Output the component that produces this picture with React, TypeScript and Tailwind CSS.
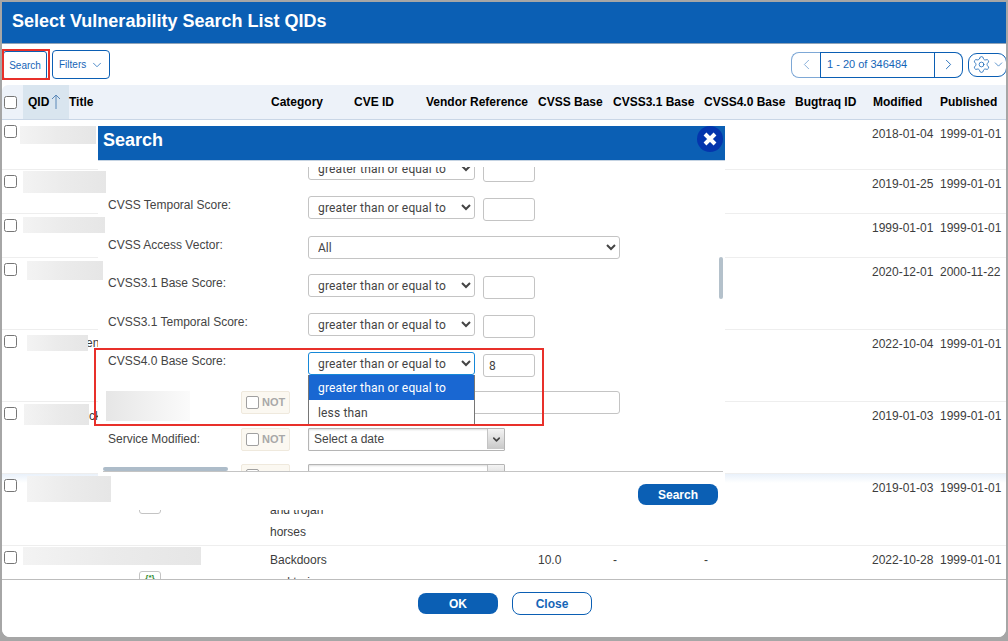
import { ChevronDown, ChevronLeft, ChevronRight, Settings } from "lucide-react";

const rows = [
  { h: "h-[50px]", mod: "2018-01-04", pub: "1999-01-01" },
  { h: "h-[44px]", mod: "2019-01-25", pub: "1999-01-01" },
  { h: "h-[44px]", mod: "1999-01-01", pub: "1999-01-01" },
  { h: "h-[72px]", mod: "2020-12-01", pub: "2000-11-22" },
  { h: "h-[72px]", tail: "en", tailClass: "pt-[2px] pl-[63px]", mod: "2022-10-04", pub: "1999-01-01" },
  { h: "h-[72px]", tail: "ck", tailClass: "pt-[3px] pl-[66px]", mod: "2019-01-03", pub: "1999-01-01" },
  {
    h: "h-[72px] bg-[linear-gradient(#e9f1fa,#ffffff_9px)]",
    cat: ["Backdoors", "and trojan", "horses"],
    mod: "2019-01-03",
    pub: "1999-01-01",
    icon: true,
  },
  {
    h: "h-[72px]",
    cat: ["Backdoors", "and trojan", "horses"],
    base: "10.0",
    v31: "-",
    v40: "-",
    mod: "2022-10-28",
    pub: "1999-01-01",
    icon: true,
  },
];

// blurred-out names sit on top of everything, modal included
const redactions = [
  "top-[126px] left-[20px] h-[18px] w-[76px]",
  "top-[171px] left-[23px] h-[22px] w-[83px]",
  "top-[217px] left-[23px] h-[16px] w-[82px]",
  "top-[261px] left-[27px] h-[19px] w-[76px]",
  "top-[335px] left-[27px] h-[16px] w-[61px]",
  "top-[404px] left-[24px] h-[21px] w-[65px]",
  "top-[476px] left-[27px] h-[26px] w-[84px]",
  "top-[547px] left-[23px] h-[18px] w-[178px]",
];

const gridCols =
  "grid grid-cols-[21px_46px_202px_83px_72px_112px_75px_91px_91px_78px_67px_66px]";

export default function App() {
  return (
    <div className="relative h-[641px] w-[1008px] overflow-hidden bg-[#a6a6a6] pt-[2px] pr-[2px] pb-[4px] pl-[2px] font-['Liberation_Sans',Arial,sans-serif] text-[12px]">
      <div className="flex h-full flex-col overflow-hidden rounded-b-[8px] bg-white">
        <header className="flex h-[42px] shrink-0 items-center border-b border-[#8fa3b8] bg-[#0b5fb4] pb-[2px] pl-[10px] text-[18px] font-bold text-white">
          Select Vulnerability Search List QIDs
        </header>
        <Toolbar />
        <Table />
        <Footer />
      </div>
      <SearchModal />
      {redactions.map((r) => (
        <div key={r} className={`absolute z-20 ${r} bg-gradient-to-r from-[#f3f3f3] via-[#ebebeb] to-[#e6e6e6]`} />
      ))}
      <div className="absolute top-[391px] left-[106px] z-20 h-[30px] w-[84px] bg-gradient-to-r from-[#e6e6e6] to-[#fbfbfb]" />
      <div className="absolute top-[49px] left-[2px] h-[31px] w-[48px] border-2 border-[#e8302a]" />
      <div className="absolute top-[348px] left-[94px] z-30 h-[78px] w-[450px] border-2 border-[#e8302a]" />
    </div>
  );
}

function Toolbar() {
  return (
    <div className="flex h-[41px] shrink-0 items-center pl-[1px] text-[#1565b7]">
      <button className="mt-[1px] h-[29px] w-[44px] rounded-[3px] border border-[#0b5fb4] text-[10px]">
        Search
      </button>
      <button className="ml-[5px] flex h-[29px] w-[58px] items-center gap-[4px] rounded-[4px] border border-[#0b5fb4] pl-[6px] text-[10px]">
        Filters
        <ChevronDown size={14} strokeWidth={1.25} />
      </button>
      <div className="ml-auto flex h-[26px] items-center">
        <button className="flex h-[26px] w-[29px] items-center justify-center rounded-l-[8px] border border-r-0 border-[#7ea8d6] text-[#7ea8d6]">
          <ChevronLeft size={17} strokeWidth={1.25} />
        </button>
        <div className="flex h-[26px] w-[115px] items-center border border-[#0b5fb4] pl-[6px] text-[11px]">
          1 - 20 of 346484
        </div>
        <button className="flex h-[26px] w-[28px] items-center justify-center rounded-r-[8px] border border-l-0 border-[#0b5fb4]">
          <ChevronRight size={17} strokeWidth={1.25} />
        </button>
        <button className="mr-[-1px] ml-[5px] flex h-[24px] w-[39px] items-center gap-[1px] rounded-[9px] border border-[#0b5fb4] pl-[3px]">
          <Settings size={19} strokeWidth={1} />
          <ChevronDown size={13} strokeWidth={1.25} />
        </button>
      </div>
    </div>
  );
}

function Table() {
  return (
    <div className="min-h-0 flex-1 overflow-hidden">
      <div className={`${gridCols} h-[35px] items-center rounded-tl-[6px] border-b border-[#c9d6e6] bg-[#edf2f9] font-bold text-black`}>
        <div className="pl-[2px]">
          <input type="checkbox" className="block" />
        </div>
        <div className="flex h-full items-center bg-[#d9e5ef] pl-[5px]">
          QID
          <svg width="10" height="16" viewBox="0 0 10 16" fill="none" stroke="#5b88b8" className="ml-[2px]">
            <path d="M5 15V1M1 5l4-4 4 4" />
          </svg>
        </div>
        <div>Title</div>
        <div>Category</div>
        <div>CVE ID</div>
        <div className="whitespace-nowrap">Vendor Reference</div>
        <div>CVSS Base</div>
        <div className="whitespace-nowrap">CVSS3.1 Base</div>
        <div className="whitespace-nowrap">CVSS4.0 Base</div>
        <div>Bugtraq ID</div>
        <div>Modified</div>
        <div>Published</div>
      </div>
      {rows.map((row) => (
        <div key={row.mod + row.h} className={`${gridCols} ${row.h} border-b border-[#eeeeee] leading-[22px] text-[#3c3c3c]`}>
          <div className="pt-[5px] pl-[2px]">
            <input type="checkbox" className="block" />
          </div>
          <div className="relative">
            {row.tail && <div className={row.tailClass}>{row.tail}</div>}
            {row.icon && (
              <div className="absolute top-[25px] left-[116px] h-[15px] w-[22px] rounded-[3px] border border-[#c4c4c4] text-center text-[8px] leading-[12px] font-bold text-[#2e8b2e]">
                {"{*}"}
              </div>
            )}
          </div>
          <div />
          <div className="-ml-[1px] pt-[3px]">
            {row.cat?.map((line) => (
              <div key={line}>{line}</div>
            ))}
          </div>
          <div />
          <div />
          <div className="pt-[3px]">{row.base}</div>
          <div className="pt-[3px]">{row.v31}</div>
          <div className="pt-[3px]">{row.v40}</div>
          <div />
          <div className="-ml-[1px] pt-[3px]">{row.mod}</div>
          <div className="pt-[3px]">{row.pub}</div>
        </div>
      ))}
    </div>
  );
}

function Footer() {
  return (
    <div className="flex h-[58px] shrink-0 items-start justify-center gap-[14px] border-t border-[#bdbdbd] bg-white pt-[13px] pl-[2px] text-[12px] font-bold">
      <button className="h-[21px] w-[80px] rounded-[8px] bg-[#0b5fb4] text-white">OK</button>
      <button className="-mt-[1px] h-[23px] w-[80px] rounded-[8px] border border-[#0b5fb4] text-[#1565b7]">Close</button>
    </div>
  );
}

function ScoreSelect({ focused }: { focused?: boolean }) {
  return (
    <select
      className={`h-[23px] w-[167px] rounded-[3px] border pl-[5px] font-['Roboto',sans-serif] text-[12px] tracking-[0.15px] text-[#444] ${
        focused ? "border-[#1688d8]" : "border-[#c4c4c4]"
      }`}
      defaultValue="gte"
    >
      <option value="gte">greater than or equal to</option>
      <option value="lt">less than</option>
    </select>
  );
}

function ScoreRow({ label, h, value, open }: { label: string; h: string; value?: string; open?: boolean }) {
  return (
    <div className={`relative flex ${h} items-start`}>
      <div className="w-[200px] text-[#444]">{label}</div>
      <ScoreSelect focused={open} />
      <input
        readOnly
        value={value ?? ""}
        className="mt-[2px] ml-[8px] h-[23px] w-[52px] rounded-[3px] border border-[#c4c4c4] pl-[5px] font-['Roboto',sans-serif] text-[12px] text-[#444]"
      />
      {open && (
        <div className="absolute top-[23px] left-[200px] z-10 w-[167px] border-x border-b border-[#767676] bg-white font-['Roboto',sans-serif] tracking-[0.15px] text-[#444]">
          <div className="flex h-[25px] items-center bg-[#1967d2] pl-[9px] text-white">greater than or equal to</div>
          <div className="flex h-[25px] items-center pl-[9px]">less than</div>
        </div>
      )}
    </div>
  );
}

function NotBox() {
  return (
    <div className="flex h-[23px] w-[49px] items-center gap-[3px] rounded-[2px] border border-[#efe9dd] bg-[#fbf8f1] pl-[4px] text-[11px] font-bold text-[#a8a8a8]">
      <span className="h-[13px] w-[13px] rounded-[2px] border border-[#a0a0a0] bg-white" />
      NOT
    </div>
  );
}

function DateSelect({ text }: { text?: string }) {
  return (
    <div className="ml-[18px] flex h-[23px] w-[197px] items-center rounded-[1px] border border-[#b5b5b5] pb-[1px] pl-[5px] text-[#444] shadow-[inset_0_1px_2px_#dddddd]">
      {text}
      <div className="ml-auto flex h-full w-[17px] items-center justify-center border-l border-[#c4c4c4] bg-gradient-to-b from-[#f4f4f4] to-[#c8c8c8]">
        <ChevronDown size={11} strokeWidth={3.5} color="#444" />
      </div>
    </div>
  );
}

function SearchModal() {
  return (
    <div className="absolute top-[126px] left-[98px] z-10 flex h-[384px] w-[627px] flex-col bg-white">
      <div className="flex h-[35px] shrink-0 items-start justify-between border-b border-[#c5d3e2] bg-[#0b5fb4] pr-[2px] pl-[5px] text-[18px] leading-[28px] font-bold text-white">
        Search
        <button className="flex h-[26px] w-[26px] items-center justify-center rounded-full bg-[#0435ad]">
          <svg width="14" height="14" viewBox="0 0 14 14" stroke="white" strokeWidth="4">
            <path d="M2 2l10 10M12 2L2 12" />
          </svg>
        </button>
      </div>
      <div className="relative h-[310px] shrink-0 pt-[6px] pl-[10px]">
        <div className="h-full overflow-hidden">
          <div className="-mt-[10px]">
            <ScoreRow label="" h="h-[39px]" />
            <ScoreRow label="CVSS Temporal Score:" h="h-[40px]" />
            <div className="flex h-[38px] items-start">
              <div className="w-[200px] text-[#444]">CVSS Access Vector:</div>
              <select className="h-[23px] w-[312px] rounded-[3px] border border-[#c4c4c4] pl-[5px] font-['Roboto',sans-serif] text-[12px] text-[#444]">
                <option>All</option>
              </select>
            </div>
            <ScoreRow label="CVSS3.1 Base Score:" h="h-[39px]" />
            <ScoreRow label="CVSS3.1 Temporal Score:" h="h-[39px]" />
            <ScoreRow label="CVSS4.0 Base Score:" h="h-[39px]" value="8" open />
            <div className="flex h-[37px] items-start">
              <div className="w-[133px]" />
              <NotBox />
              <input readOnly className="ml-[18px] h-[23px] w-[312px] rounded-[3px] border border-[#c4c4c4]" />
            </div>
            <div className="flex h-[36px] items-start">
              <div className="mt-[2px] w-[133px] text-[#444]">Service Modified:</div>
              <NotBox />
              <DateSelect text="Select a date" />
            </div>
            <div className="flex h-[36px] items-start">
              <div className="w-[133px]" />
              <NotBox />
              <DateSelect />
            </div>
          </div>
        </div>
        <div className="absolute top-[96px] right-[2px] h-[42px] w-[4px] rounded-[2px] bg-[#b4c1cb]" />
        <div className="absolute bottom-0 left-[5px] h-[4px] w-[125px] rounded-[2px] bg-[#adbcc9]" />
      </div>
      <div className="mr-[2px] ml-[5px] flex min-h-0 flex-1 items-start justify-end border-t border-[#c4c4c4] pt-[12px] pr-[5px]">
        <button className="h-[21px] w-[80px] rounded-[8px] bg-[#0b5fb4] text-[12px] font-bold text-white">Search</button>
      </div>
    </div>
  );
}
